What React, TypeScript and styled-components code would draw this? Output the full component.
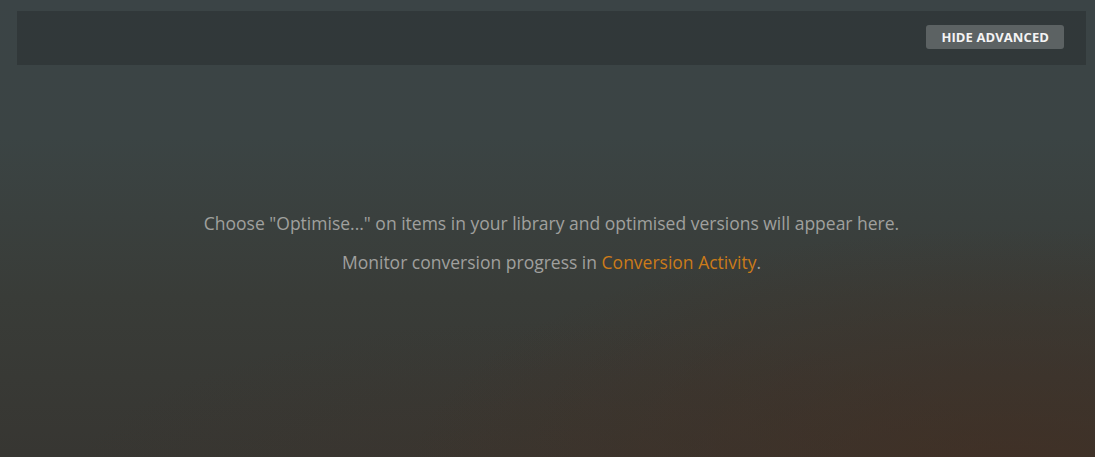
import React from 'react';
import styled, { createGlobalStyle } from 'styled-components';

const GlobalStyle = createGlobalStyle`
  html, body {
    margin: 0;
    padding: 0;
    height: 100%;
  }
  body {
    font-family: 'Open Sans', 'Liberation Sans', sans-serif;
    background: #393f3f;
  }
  #root {
    height: 100%;
  }
`;

const Page = styled.div`
  box-sizing: border-box;
  width: 100%;
  height: 457px;
  overflow: hidden;
  padding: 11px 9px 0 17px;
  background:
    radial-gradient(ellipse 55% 55% at 92% 105%, rgba(66, 47, 35, 0.85) 0%, rgba(66, 47, 35, 0) 100%),
    radial-gradient(ellipse 45% 40% at 50% 110%, rgba(62, 52, 43, 0.6) 0%, rgba(62, 52, 43, 0) 100%),
    linear-gradient(180deg, #3b4446 0%, #3b4444 30%, #393c38 65%, #373632 100%);
`;

const Toolbar = styled.div`
  height: 54px;
  display: flex;
  align-items: center;
  justify-content: flex-end;
  padding-right: 22px;
  background: rgba(0, 0, 0, 0.17);
`;

const ToolbarButton = styled.button`
  height: 24px;
  margin-top: -2px;
  padding: 0 15px;
  border: 0;
  border-radius: 3px;
  background: #5c6263;
  color: #f4f4f4;
  font-family: 'Open Sans', 'Liberation Sans', sans-serif;
  font-size: 13px;
  font-weight: 700;
  text-transform: uppercase;
  letter-spacing: 0.1px;
  cursor: pointer;
`;

const EmptyState = styled.div`
  display: flex;
  flex-direction: column;
  align-items: center;
  gap: 14px;
  padding-top: 146px;
`;

const Message = styled.p`
  margin: 0;
  font-size: 17.5px;
  line-height: 25px;
  color: #a0a09e;
`;

const Link = styled.a`
  color: #cc7b19;
  text-decoration: none;
`;

export default function App() {
  return (
    <>
      <GlobalStyle />
      <Page>
        <Toolbar>
          <ToolbarButton>Hide Advanced</ToolbarButton>
        </Toolbar>
        <EmptyState>
          <Message>
            Choose "Optimise..." on items in your library and optimised versions will appear here.
          </Message>
          <Message>
            Monitor conversion progress in <Link href="#">Conversion Activity</Link>.
          </Message>
        </EmptyState>
      </Page>
    </>
  );
}
